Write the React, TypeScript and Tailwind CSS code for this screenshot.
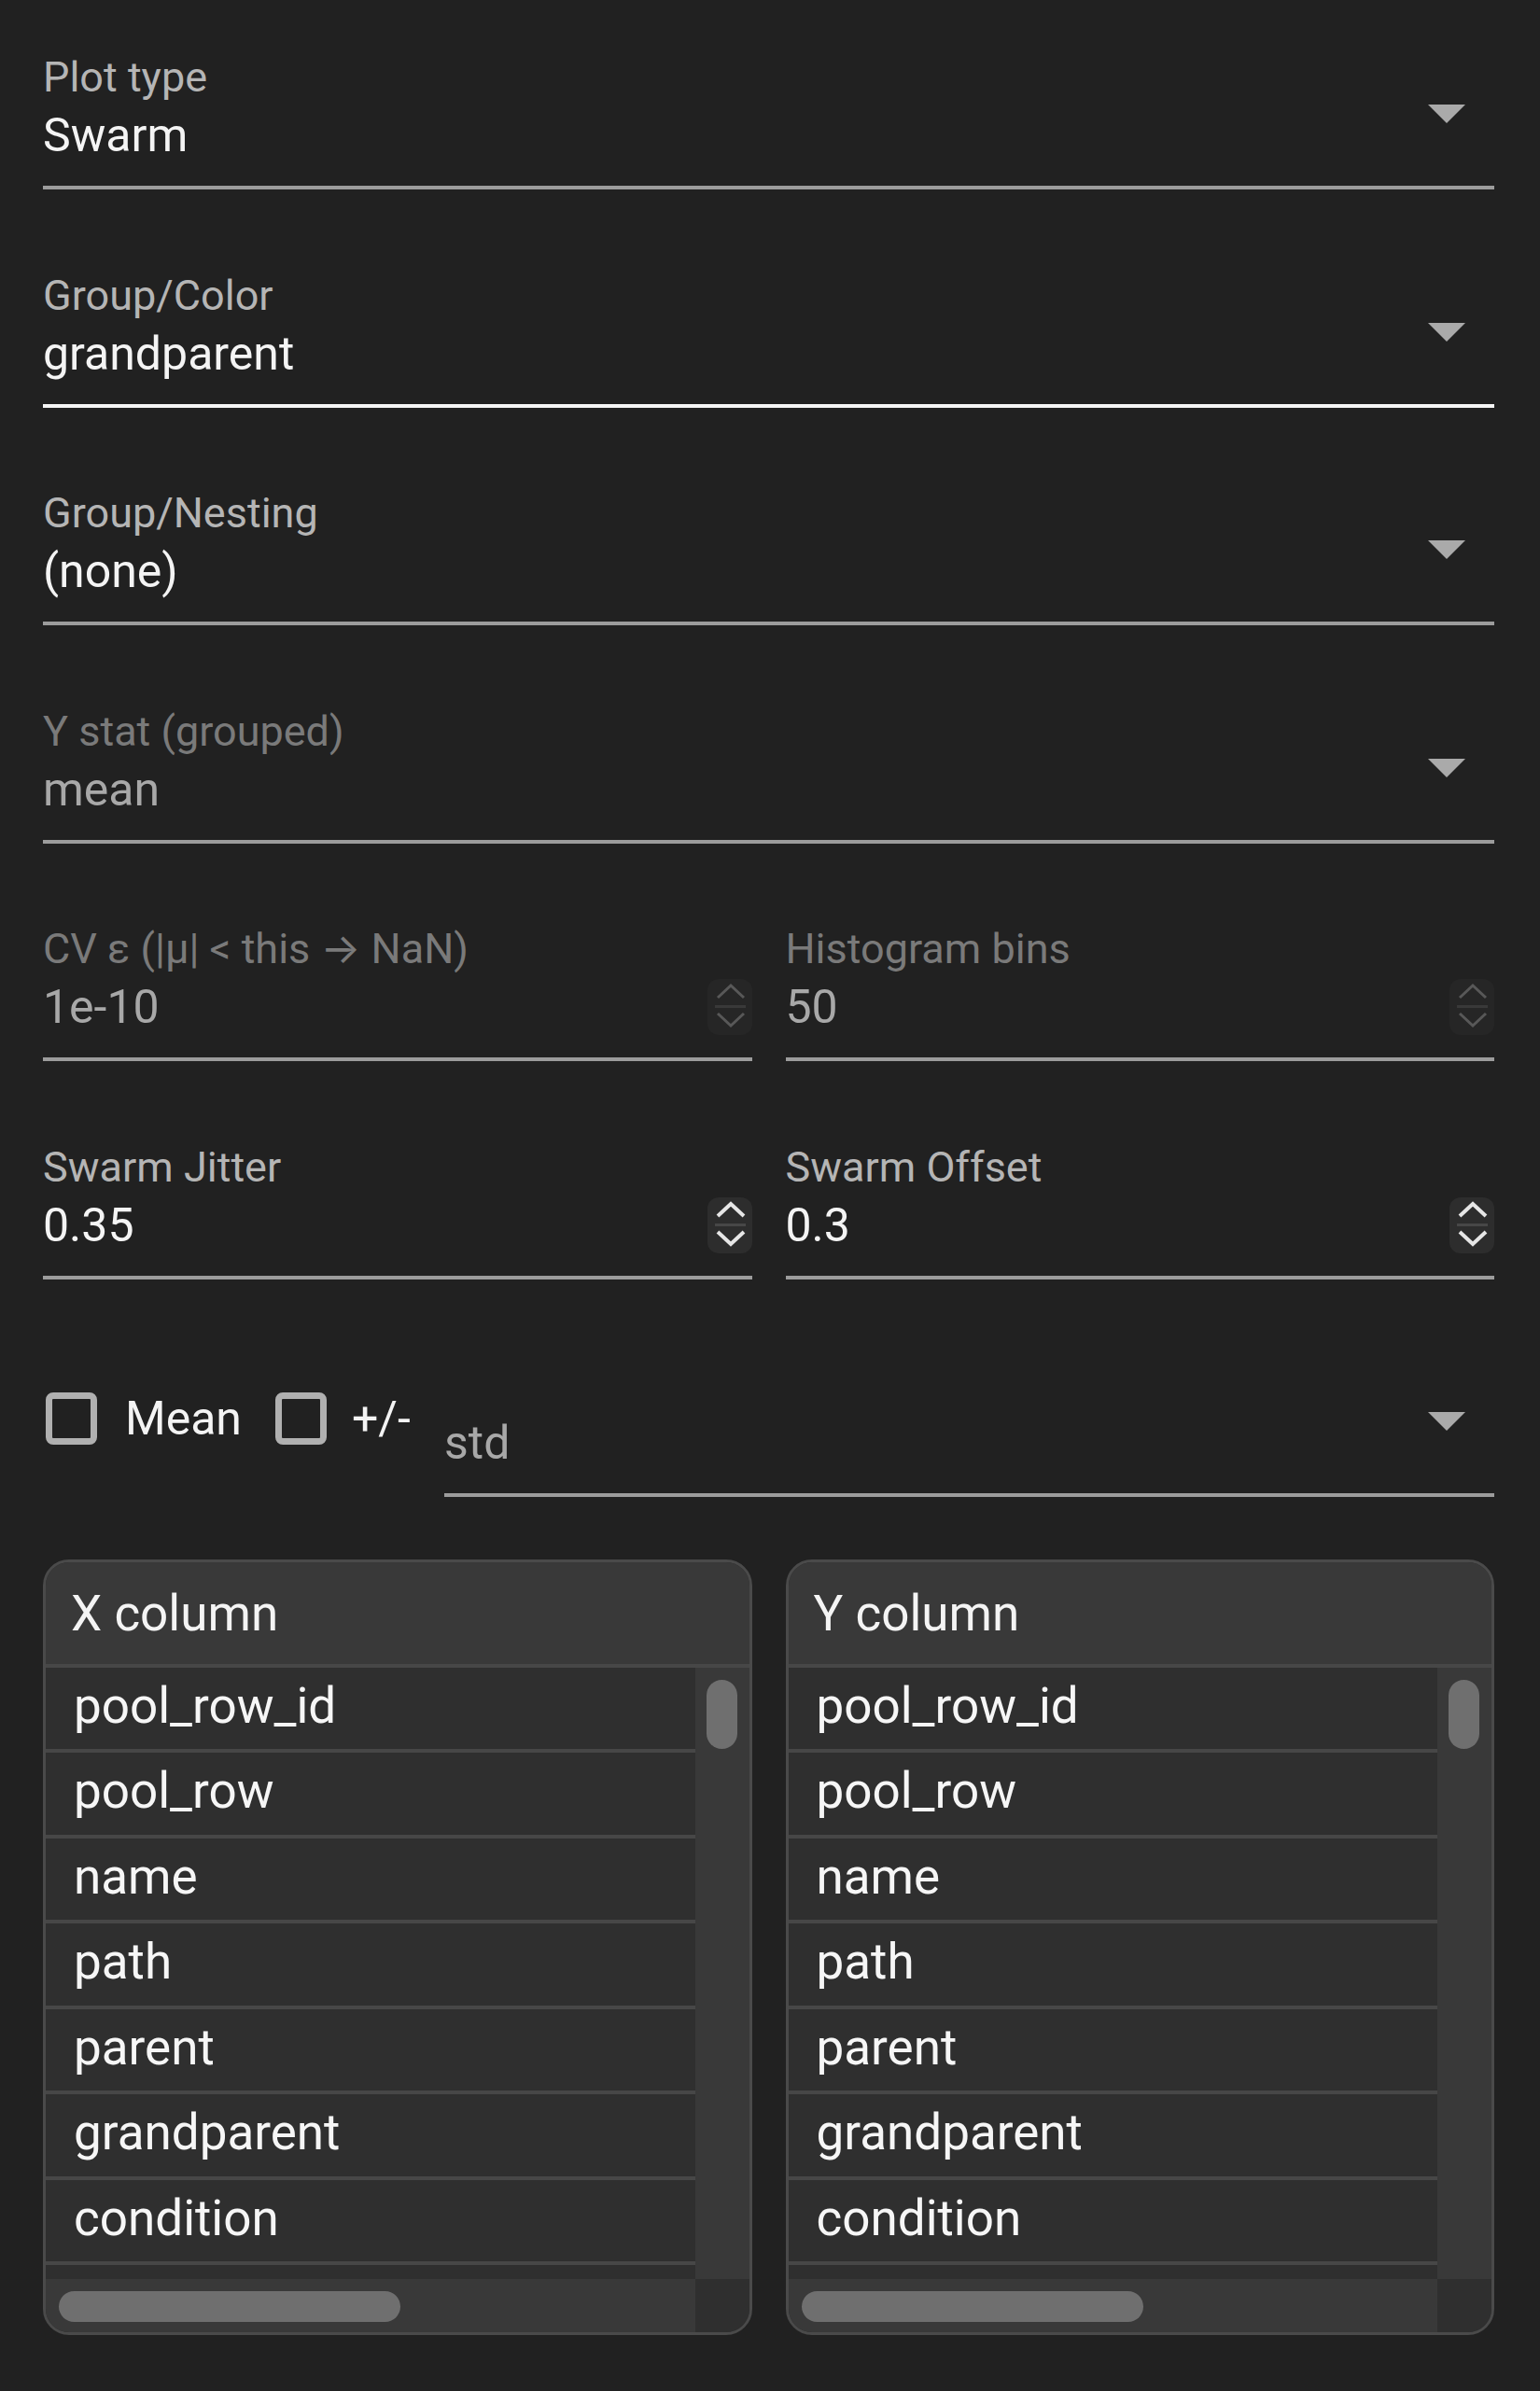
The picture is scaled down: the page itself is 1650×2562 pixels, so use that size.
import React from 'react';

const columns = ['pool_row_id', 'pool_row', 'name', 'path', 'parent', 'grandparent', 'condition'];

// MUI-like drop arrow
function Caret() {
    return (
        <svg width="40" height="20" viewBox="0 0 40 20" className="absolute top-[56px] right-[31px]">
            <polygon points="0,0 40,0 20,20" fill="#aaaaaa" />
        </svg>
    );
}

function Spinner({ disabled }: { disabled?: boolean }) {
    const stroke = disabled ? '#585858' : '#e6e6e6';
    return (
        <div className={`h-[60px] w-[48px] shrink-0 rounded-[12px] ${disabled ? 'bg-[#262626]' : 'bg-[#2d2d2d]'}`}>
            <svg width="48" height="60" viewBox="0 0 48 60">
                <polyline points="11,20 25,7 39,20" fill="none" stroke={stroke} strokeWidth={disabled ? 3 : 4} />
                <line x1="8" y1="29.5" x2="41" y2="29.5" stroke={disabled ? '#393939' : '#474747'} strokeWidth="3" />
                <polyline points="11,37 25,50 39,37" fill="none" stroke={stroke} strokeWidth={disabled ? 3 : 4} />
            </svg>
        </div>
    );
}

interface FieldProps {
    label?: React.ReactNode;
    value: string;
    disabled?: boolean;
    active?: boolean;
    select?: boolean;
    number?: boolean;
}

function Field({ label, value, disabled, active, select, number }: FieldProps) {
    return (
        <div className="relative">
            {label ? (
                <div className={`h-[53px] text-[45px] leading-[53px] whitespace-nowrap ${disabled ? 'text-[#7a7a7a]' : 'text-[#b5b5b5]'}`}>
                    {label}
                </div>
            ) : (
                <div className="h-[53px]" />
            )}
            <div
                className={`mt-[6px] flex h-[88px] items-start justify-between border-b-4 ${
                    active ? 'border-[#f5f5f5]' : 'border-[#9c9c9c]'
                }`}
            >
                <span className={`text-[50px] leading-[60px] ${disabled ? 'text-[#a8a8a8]' : 'text-[#f4f4f4]'}`}>{value}</span>
                {number && <Spinner disabled={disabled} />}
            </div>
            {select && <Caret />}
        </div>
    );
}

function Checkbox() {
    return <div className="h-[56px] w-[55px] shrink-0 rounded-[8px] border-[7px] border-[#b0b0b0]" />;
}

function ColumnList({ title }: { title: string }) {
    return (
        <div className="flex h-[831px] flex-col overflow-hidden rounded-[28px] border-[3px] border-[#4a4a4a] bg-[#2f2f2f]">
            <div className="h-[113px] shrink-0 border-b-4 border-[#474747] bg-[#393939] pt-[24px] pl-[27px] text-[53px] leading-[62px] text-[#f4f4f4]">
                {title}
            </div>
            <div className="flex min-h-0 flex-1">
                <div className="min-w-0 flex-1 overflow-hidden">
                    {columns.map((c) => (
                        <div key={c} className="h-[91.5px] border-b-4 border-[#474747] pt-[10px] pl-[30px] text-[53px] leading-[62px] text-[#f6f6f6]">
                            {c}
                        </div>
                    ))}
                </div>
                <div className="w-[58px] shrink-0 bg-[#393939] pt-[13px] pl-[12px]">
                    <div className="h-[74px] w-[33px] rounded-full bg-[#6f6f6f]" />
                </div>
            </div>
            <div className="flex h-[57px] shrink-0">
                <div className="flex-1 bg-[#393939] pt-[13px] pl-[14px]">
                    <div className="h-[33px] w-[366px] rounded-full bg-[#6f6f6f]" />
                </div>
                <div className="w-[58px] bg-[#2f2f2f]" />
            </div>
        </div>
    );
}

export default function App() {
    return (
        <div className="min-h-screen bg-[#212121] pt-[56px] pr-[49px] pl-[46px] font-['Roboto',sans-serif]">
            <div className="flex flex-col gap-[86.5px]">
                <Field label="Plot type" value="Swarm" select />
                <Field label="Group/Color" value="grandparent" select active />
                <Field label="Group/Nesting" value="(none)" select />
                <Field label="Y stat (grouped)" value="mean" select disabled />

                <div className="grid grid-cols-2 gap-[36px]">
                    <Field
                        label={
                            <>
                                CV ε (|μ| &lt; this <span className="font-['Inter',sans-serif] leading-none">→</span> NaN)
                            </>
                        }
                        value="1e-10"
                        number
                        disabled
                    />
                    <Field label="Histogram bins" value="50" number disabled />
                </div>

                <div className="grid grid-cols-2 gap-[36px]">
                    <Field label="Swarm Jitter" value="0.35" number />
                    <Field label="Swarm Offset" value="0.3" number />
                </div>

                {/* Mean / +/- toggles with error type select */}
                <div className="flex items-start">
                    <div className="flex h-[125px] w-[430px] shrink-0 items-center pl-[3px] text-[50px] leading-[60px] text-[#f4f4f4]">
                        <Checkbox />
                        <span className="ml-[30px]">Mean</span>
                        <div className="ml-[36px]">
                            <Checkbox />
                        </div>
                        <span className="ml-[27px]">+/-</span>
                    </div>
                    <div className="min-w-0 flex-1">
                        <Field value="std" select disabled />
                    </div>
                </div>
            </div>

            <div className="mt-[66.5px] grid grid-cols-2 gap-[36px] pb-[60px]">
                <ColumnList title="X column" />
                <ColumnList title="Y column" />
            </div>
        </div>
    );
}
